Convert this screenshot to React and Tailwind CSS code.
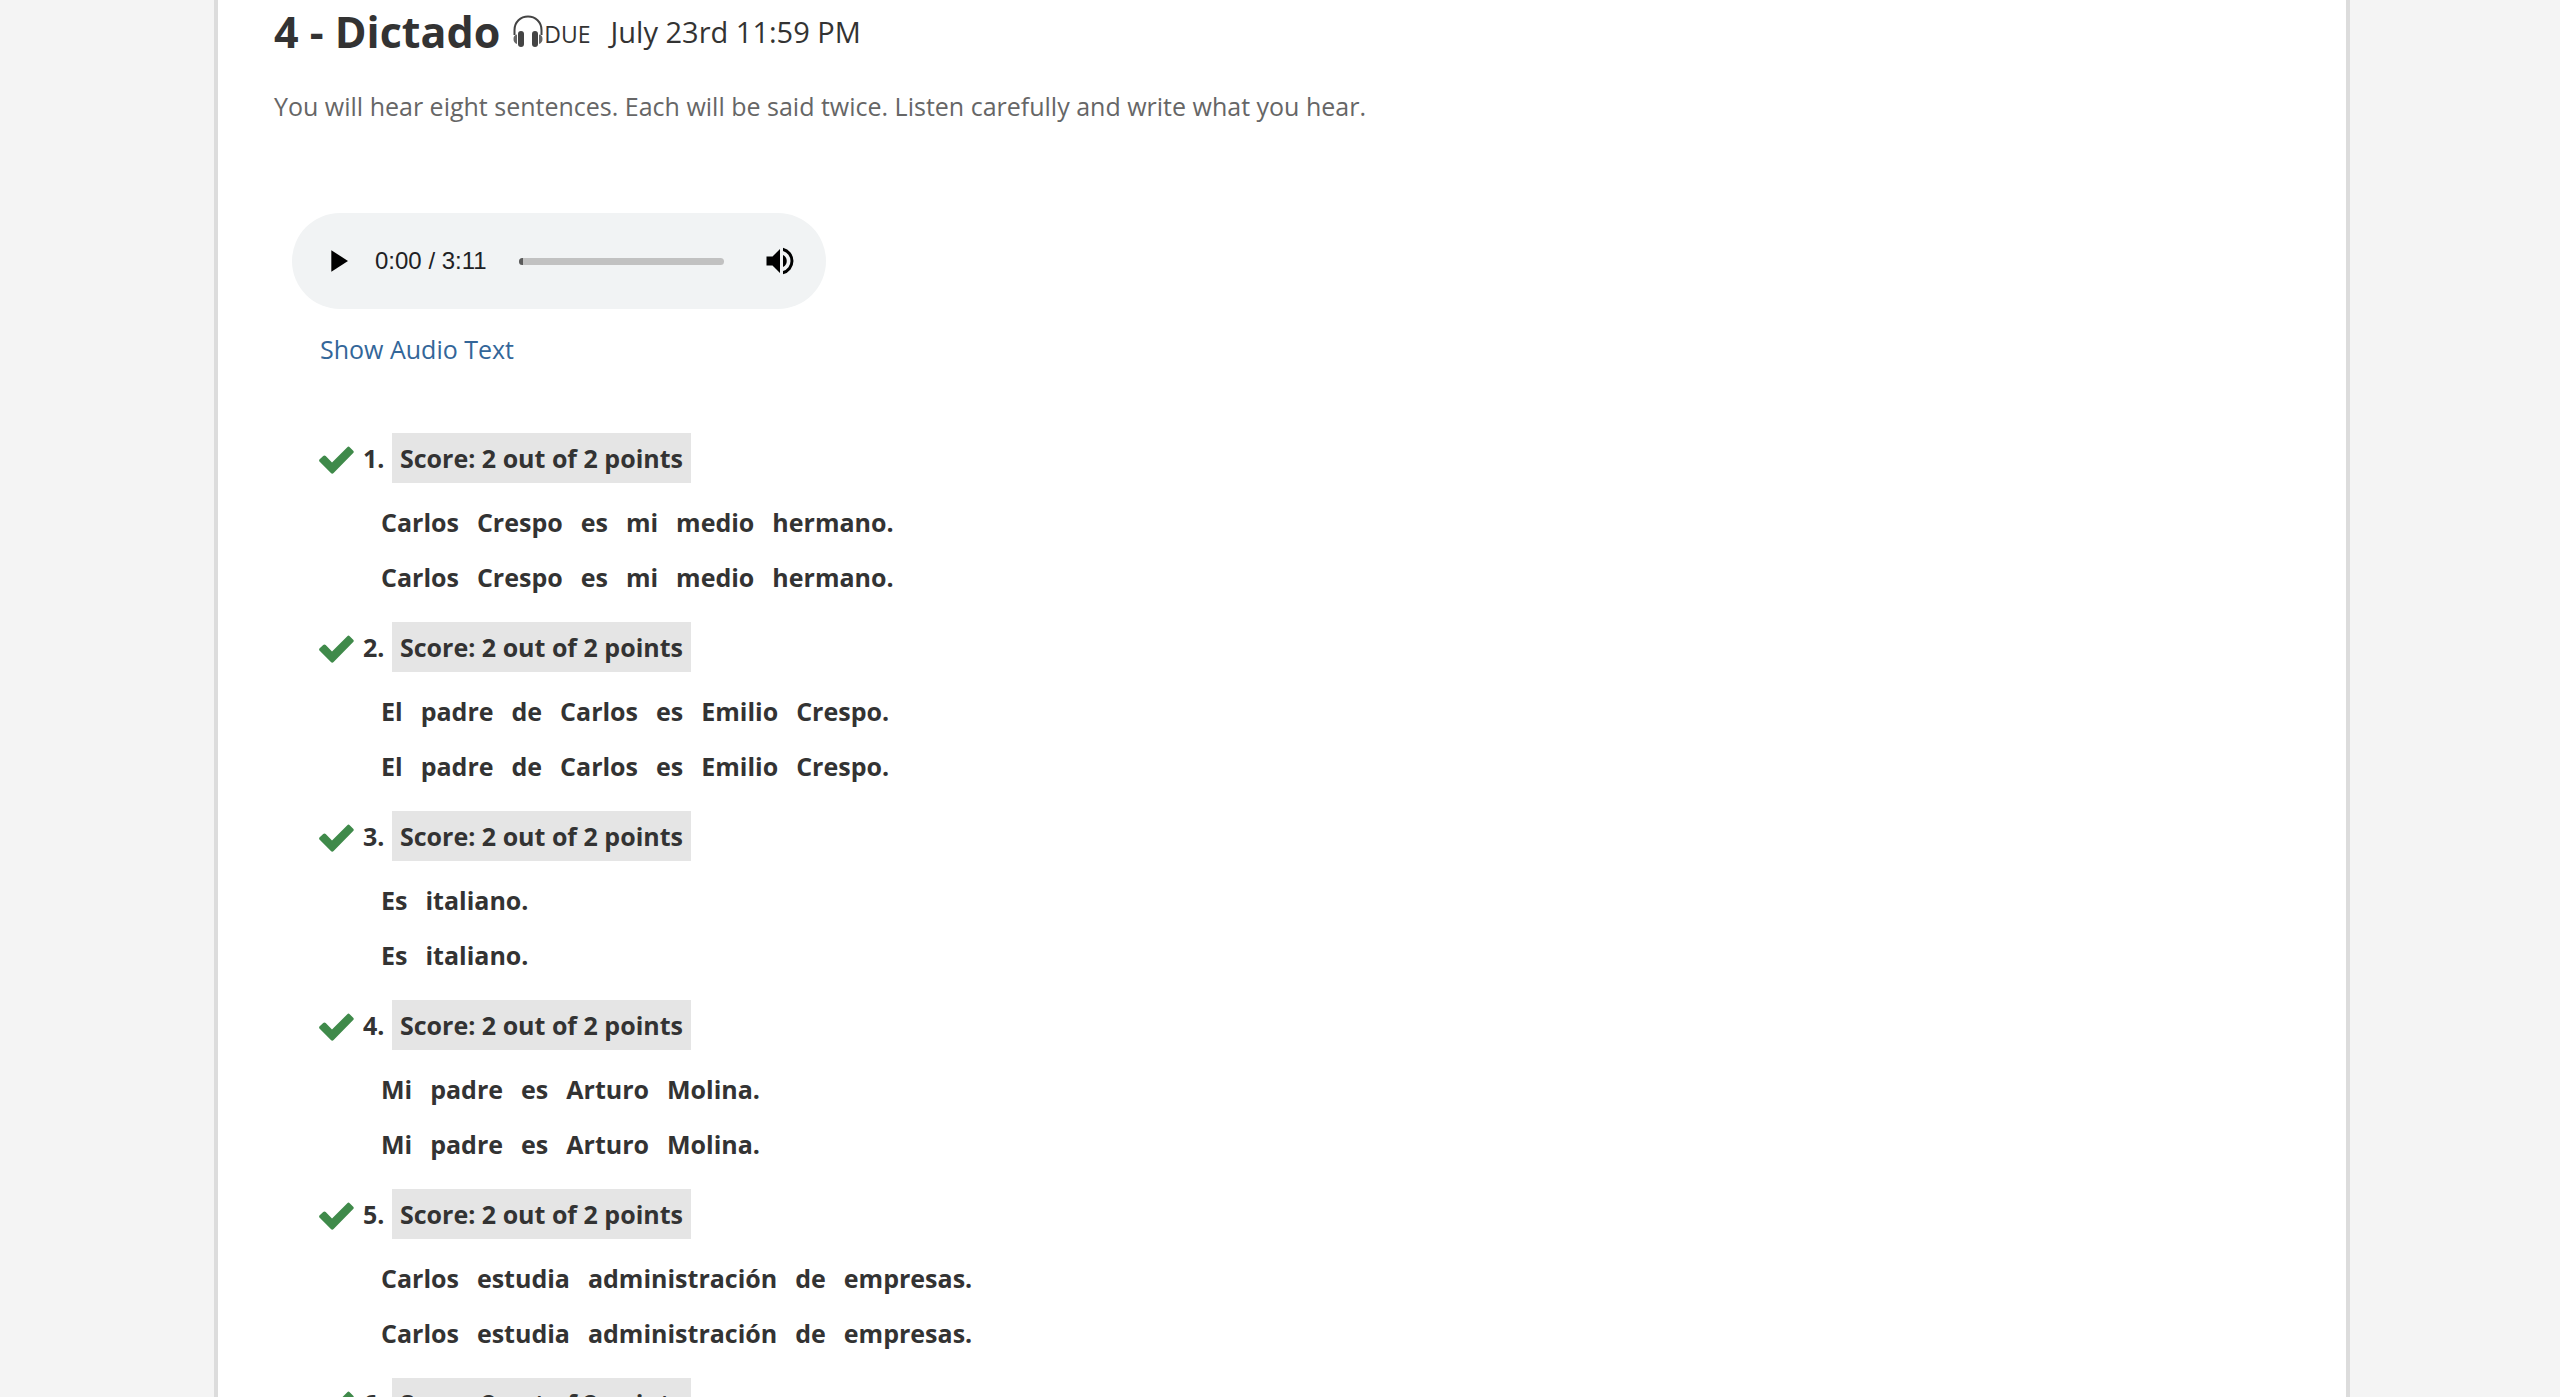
import { useState } from "react";

const questions = [
  { id: 1, sentence: "Carlos Crespo es mi medio hermano." },
  { id: 2, sentence: "El padre de Carlos es Emilio Crespo." },
  { id: 3, sentence: "Es italiano." },
  { id: 4, sentence: "Mi padre es Arturo Molina." },
  { id: 5, sentence: "Carlos estudia administración de empresas." },
  { id: 6, sentence: "" },
];

function HeadphonesIcon() {
  return (
    <svg width="32" height="34" viewBox="0 0 32 34" className="shrink-0" aria-hidden="true">
      <path d="M2.500 20V15C2.500 7 8.500 1.500 16 1.500S29.500 7 29.500 15V20" fill="none" stroke="#444" strokeWidth="2" />
      <rect x="6" y="16" width="6" height="16" rx="3" fill="#444" />
      <rect x="20" y="16" width="6" height="16" rx="3" fill="#444" />
      <path d="M5 19.500v9.500C2.500 28 1.500 26.500 1.500 24s1-4 3.500-4.500zM27 19.500v9.500c2.500-1 3.500-2.500 3.500-5s-1-4-3.500-4.500z" fill="#666" />
    </svg>
  );
}

function CheckIcon() {
  return (
    <svg width="35" height="28" viewBox="0 0 35 28" className="mt-1 shrink-0" aria-hidden="true">
      <path
        d="M.7 13.200 4.200 9.900q1.300-1 2.500.2L13 16.600 28.300 1.200q1.200-1.200 2.400 0l3.500 3.500q1.100 1.200 0 2.400L14.600 27q-1.400 1.300-2.700 0L.7 15.700q-1.200-1.300 0-2.500z"
        fill="#3f8a4a"
      />
    </svg>
  );
}

function AudioPlayer() {
  const [position, setPosition] = useState(0);

  return (
    <div className="ml-[18px] flex h-24 w-[534px] items-center rounded-full bg-[#f1f3f4] px-[26px]">
      <button type="button" aria-label="Play" className="flex size-10 items-center justify-center">
        <svg width="40" height="40" viewBox="0 0 24 24" aria-hidden="true">
          <path d="M8 5.500v13l10-6.500z" fill="#000" />
        </svg>
      </button>
      <span className="ml-[17px] font-['Liberation_Sans',sans-serif] text-2xl text-[#202124]">0:00 / 3:11</span>
      <input
        type="range"
        aria-label="Seek"
        min="0"
        max="191"
        value={position}
        onChange={(e) => setPosition(e.target.value)}
        className="ml-8 h-[7px] min-w-0 flex-1 appearance-none rounded-full bg-[#c1c1c1] [&::-webkit-slider-thumb]:h-[7px] [&::-webkit-slider-thumb]:w-1 [&::-webkit-slider-thumb]:appearance-none [&::-webkit-slider-thumb]:rounded-l-sm [&::-webkit-slider-thumb]:bg-[#5a5a5a]"
      />
      <button type="button" aria-label="Mute" className="ml-9 flex size-10 items-center justify-center">
        <svg width="36" height="36" viewBox="0 0 24 24" aria-hidden="true">
          <path
            d="M3 9v6h4l5 5V4L7 9H3zm13.500 3A4.500 4.500 0 0 0 14 7.970v8.050A4.480 4.480 0 0 0 16.500 12zM14 3.230v2.060a7 7 0 0 1 0 13.420v2.060a9 9 0 0 0 0-17.540z"
            fill="#000"
          />
        </svg>
      </button>
    </div>
  );
}

function Sentence({ text }) {
  return (
    <p className="flex h-[55px] items-center gap-[18px]">
      {text.split(" ").map((word, i) => (
        <span key={i}>{word}</span>
      ))}
    </p>
  );
}

function Question({ id, sentence }) {
  return (
    <li className="pb-[18px] text-[25px] leading-9 font-bold">
      <div className="flex items-center">
        <CheckIcon />
        <span className="ml-[9px] w-[29px]">{id}.</span>
        <span className="bg-[#e5e5e5] px-2 py-[7px]">Score: 2 out of 2 points</span>
      </div>
      <div className="mt-[11px] ml-[62px]">
        <Sentence text={sentence} />
        <Sentence text={sentence} />
      </div>
    </li>
  );
}

export default function App() {
  return (
    <div className="h-screen overflow-hidden bg-[#f4f4f4] pr-[210px] pl-[214px] font-['Open_Sans',sans-serif] text-[#333]">
      <main className="min-h-full border-x-4 border-[#dcdcdc] bg-white px-14">
        {/* Header */}
        <header className="flex items-center">
          <h1 className="text-[43px] leading-[64px] font-bold">4 - Dictado</h1>
          <div className="ml-3 flex items-center">
            <HeadphonesIcon />
            <div className="flex items-baseline">
              <span className="text-[23px]">DUE</span>
              <span className="ml-5 text-[29px]">July 23rd 11:59 PM</span>
            </div>
          </div>
        </header>

        <p className="mt-6 text-[25px] leading-9 text-[#666]">
          You will hear eight sentences. Each will be said twice. Listen carefully and write what you hear.
        </p>

        {/* Audio */}
        <div className="mt-[89px]">
          <AudioPlayer />
          <a href="#" className="mt-[22px] ml-[46px] inline-block text-[25px] leading-9 text-[#336699]">
            Show Audio Text
          </a>
        </div>

        {/* Answers */}
        <ol className="mt-[66px] ml-[45px]">
          {questions.map((q) => (
            <Question key={q.id} id={q.id} sentence={q.sentence} />
          ))}
        </ol>
      </main>
    </div>
  );
}
